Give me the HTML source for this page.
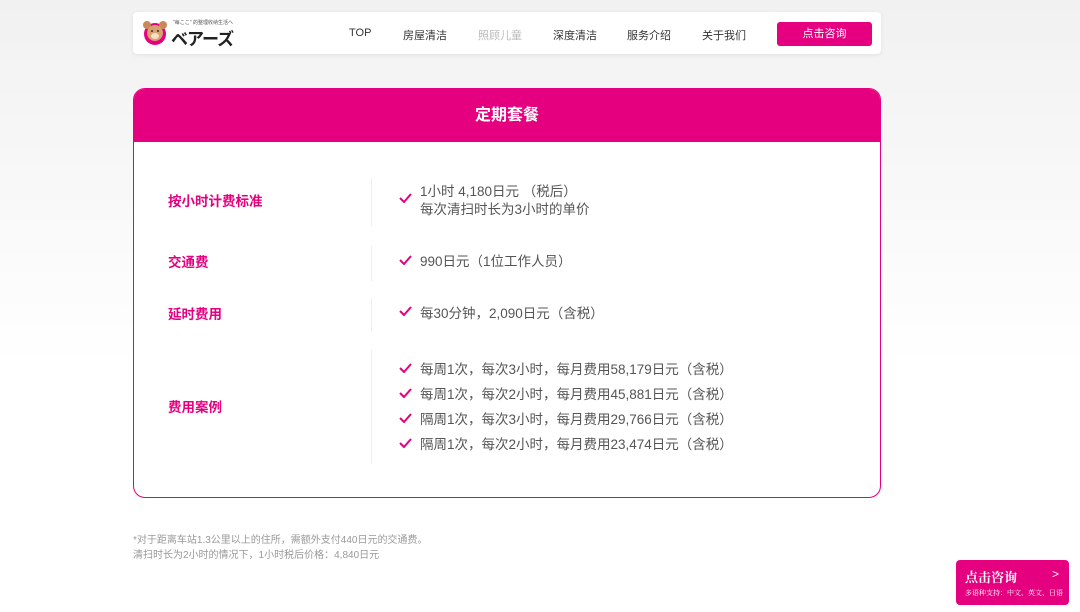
<!DOCTYPE html>
<html><head><meta charset="utf-8"><style>
*{margin:0;padding:0;box-sizing:border-box}
body{width:1080px;height:612px;overflow:hidden;background:linear-gradient(#f1f1f1,#fff 60%);font-family:"Liberation Sans","Noto Sans CJK SC",sans-serif;position:relative}
.nav{position:absolute;left:133px;top:12px;width:748px;height:42px;background:#fff;border-radius:4px;box-shadow:0 1px 4px rgba(0,0,0,.08)}
.nav a{position:absolute;top:15px;font-size:11px;color:#333}
.btn{position:absolute;left:644px;top:10px;width:95px;height:24px;background:#e4007f;color:#fff;font-size:11px;text-align:center;line-height:24px;border-radius:3px}
.card{position:absolute;left:133px;top:88px;width:748px;height:410px;background:#fff;border:1px solid #e4007f;border-radius:12px;overflow:hidden}
.hd{height:53px;background:#e4007f;color:#fff;font-weight:bold;font-size:16px;text-align:center;line-height:53px}
.lbl{position:absolute;left:34px;font-size:13.5px;font-weight:bold;color:#e4007f}
.vl{position:absolute;left:237px;width:1px;background:#eee}
.ln{position:absolute;left:286px;font-size:13.5px;color:#555;white-space:nowrap}
.ck{position:absolute;left:265px;width:13px;height:10px}
.fn{position:absolute;left:133px;font-size:10px;color:#999}
.cta{position:absolute;left:956px;top:560px;width:113px;height:45px;background:#e4007f;border-radius:4px;color:#fff}
</style></head><body>
<div class="nav">
 <svg style="position:absolute;left:9px;top:8px" width="26" height="26" viewBox="0 0 26 26"><circle cx="13" cy="14" r="11" fill="#e4007f"/><circle cx="5" cy="5" r="4" fill="#c98a5a"/><circle cx="21" cy="5" r="4" fill="#c98a5a"/><circle cx="13" cy="13" r="8" fill="#d9a070"/><ellipse cx="13" cy="16" rx="4" ry="3" fill="#f5e0c8"/><circle cx="10" cy="11" r="1" fill="#333"/><circle cx="16" cy="11" r="1" fill="#333"/></svg>
 <div style="position:absolute;left:40px;top:7px;font-size:5px;color:#555">"每ここ" 的整理收纳生活へ</div>
 <div style="position:absolute;left:38px;top:13px;font-size:17px;font-weight:bold;color:#222;letter-spacing:-1px">ベアーズ</div>
 <a style="left:216px">TOP</a><a style="left:270px">房屋清洁</a><a style="left:345px;color:#bbb">照顾儿童</a><a style="left:420px">深度清洁</a><a style="left:494px">服务介绍</a><a style="left:569px">关于我们</a>
 <div class="btn">点击咨询</div>
</div>
<div class="card"><div class="hd">定期套餐</div>
 <div class="lbl" style="top:101px">按小时计费标准</div><div class="vl" style="top:89px;height:48px"></div>
 <svg class="ck" style="top:104px" viewBox="0 0 13 10"><path d="M1 5l4 4 7-8" fill="none" stroke="#e4007f" stroke-width="2"/></svg>
 <div class="ln" style="top:91px">1小时 4,180日元 （税后）</div><div class="ln" style="top:109px">每次清扫时长为3小时的单价</div>
 <div class="lbl" style="top:162px">交通费</div><div class="vl" style="top:157px;height:35px"></div>
 <svg class="ck" style="top:166px" viewBox="0 0 13 10"><path d="M1 5l4 4 7-8" fill="none" stroke="#e4007f" stroke-width="2"/></svg>
 <div class="ln" style="top:161px">990日元（1位工作人员）</div>
 <div class="lbl" style="top:214px">延时费用</div><div class="vl" style="top:209px;height:33px"></div>
 <svg class="ck" style="top:217px" viewBox="0 0 13 10"><path d="M1 5l4 4 7-8" fill="none" stroke="#e4007f" stroke-width="2"/></svg>
 <div class="ln" style="top:213px">每30分钟，2,090日元（含税）</div>
 <div class="lbl" style="top:307px">费用案例</div><div class="vl" style="top:261px;height:114px"></div>
 <svg class="ck" style="top:274px" viewBox="0 0 13 10"><path d="M1 5l4 4 7-8" fill="none" stroke="#e4007f" stroke-width="2"/></svg>
 <div class="ln" style="top:269px">每周1次，每次3小时，每月费用58,179日元（含税）</div>
 <svg class="ck" style="top:299px" viewBox="0 0 13 10"><path d="M1 5l4 4 7-8" fill="none" stroke="#e4007f" stroke-width="2"/></svg>
 <div class="ln" style="top:294px">每周1次，每次2小时，每月费用45,881日元（含税）</div>
 <svg class="ck" style="top:324px" viewBox="0 0 13 10"><path d="M1 5l4 4 7-8" fill="none" stroke="#e4007f" stroke-width="2"/></svg>
 <div class="ln" style="top:319px">隔周1次，每次3小时，每月费用29,766日元（含税）</div>
 <svg class="ck" style="top:349px" viewBox="0 0 13 10"><path d="M1 5l4 4 7-8" fill="none" stroke="#e4007f" stroke-width="2"/></svg>
 <div class="ln" style="top:344px">隔周1次，每次2小时，每月费用23,474日元（含税）</div>
</div>
<div class="fn" style="top:531px">*对于距离车站1.3公里以上的住所，需额外支付440日元的交通费。</div>
<div class="fn" style="top:546px">清扫时长为2小时的情况下，1小时税后价格：4,840日元</div>
<div class="cta"><div style="position:absolute;left:9px;top:7px;font-size:13px;font-weight:bold;font-family:'Noto Serif CJK SC',serif">点击咨询</div><div style="position:absolute;right:10px;top:7px;font-size:12px">&gt;</div><div style="position:absolute;left:9px;top:28px;font-size:7px;font-family:'Noto Serif CJK SC',serif">多语种支持：中文、英文、日语</div></div>
</body></html>
